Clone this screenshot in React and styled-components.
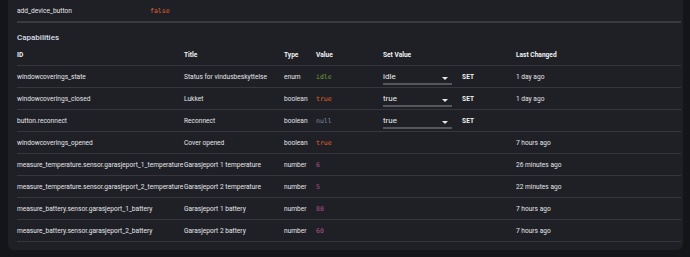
import React from 'react';
import styled, { createGlobalStyle } from 'styled-components';

const GlobalStyle = createGlobalStyle`
  body {
    margin: 0;
    background: #141518;
    font-family: Roboto, 'Liberation Sans', sans-serif;
    color: #e4e6ea;
  }
`;

const capabilities = [
  { id: 'windowcoverings_state', title: 'Status for vindusbeskyttelse', type: 'enum', value: 'idle', kind: 'enum', set: 'idle', changed: '1 day ago' },
  { id: 'windowcoverings_closed', title: 'Lukket', type: 'boolean', value: 'true', kind: 'bool', set: 'true', changed: '1 day ago' },
  { id: 'button.reconnect', title: 'Reconnect', type: 'boolean', value: 'null', kind: 'null', set: 'true', changed: '' },
  { id: 'windowcoverings_opened', title: 'Cover opened', type: 'boolean', value: 'true', kind: 'bool', changed: '7 hours ago' },
  { id: 'measure_temperature.sensor.garasjeport_1_temperature', title: 'Garasjeport 1 temperature', type: 'number', value: '6', kind: 'num', changed: '26 minutes ago' },
  { id: 'measure_temperature.sensor.garasjeport_2_temperature', title: 'Garasjeport 2 temperature', type: 'number', value: '5', kind: 'num', changed: '22 minutes ago' },
  { id: 'measure_battery.sensor.garasjeport_1_battery', title: 'Garasjeport 1 battery', type: 'number', value: '80', kind: 'num', changed: '7 hours ago' },
  { id: 'measure_battery.sensor.garasjeport_2_battery', title: 'Garasjeport 2 battery', type: 'number', value: '60', kind: 'num', changed: '7 hours ago' },
];

const valueColors = {
  enum: '#6f9a3c',
  bool: '#e0622b',
  null: '#7d8aa0',
  num: '#a9508a',
};

export default function App() {
  return (
    <>
      <GlobalStyle />
      <Card>
        <PropRow>
          <PropName>add_device_button</PropName>
          <Code color="#e0622b">false</Code>
        </PropRow>
        <Heading>Capabilities</Heading>
        <Table>
          <HeadRow>
            <span>ID</span>
            <span>Title</span>
            <span>Type</span>
            <span>Value</span>
            <span>Set Value</span>
            <span />
            <span>Last Changed</span>
          </HeadRow>
          {capabilities.map((c) => (
            <Row key={c.id}>
              <span>{c.id}</span>
              <span>{c.title}</span>
              <span>{c.type}</span>
              <Code color={valueColors[c.kind]}>{c.value}</Code>
              {c.set ? (
                <Select>
                  {c.set}
                  <Caret />
                </Select>
              ) : (
                <span />
              )}
              {c.set ? <SetButton>SET</SetButton> : <span />}
              <span>{c.changed}</span>
            </Row>
          ))}
        </Table>
      </Card>
    </>
  );
}

const Card = styled.div`
  margin: 0 7px 0 8px;
  padding: 0 2px 8px 9px;
  background: #1f2025;
  border-radius: 0 0 6px 6px;
  font-size: 6.6px;
`;

const PropRow = styled.div`
  display: flex;
  align-items: center;
  height: 21px;
  border-bottom: 2px solid #393a3f;
`;

const PropName = styled.span`
  width: 133px;
`;

const Code = styled.span`
  font-family: 'DejaVu Sans Mono', 'Liberation Mono', monospace;
  font-size: 6.5px;
  color: ${(p) => p.color};
`;

const Heading = styled.div`
  padding-top: 10px;
  height: 11px;
  line-height: 9px;
  font-size: 8px;
  font-weight: 500;
  color: #d9dfe8;
`;

const Table = styled.div`
  display: flex;
  flex-direction: column;
`;

const Row = styled.div`
  display: grid;
  grid-template-columns: 167px 100px 32px 67px 79px 54px 1fr;
  align-items: center;
  height: 21px;
  border-bottom: 1px solid #36373c;
  white-space: nowrap;
`;

const HeadRow = styled(Row)`
  font-weight: 700;
  color: #f0f1f3;
`;

const Select = styled.div`
  position: relative;
  display: flex;
  align-items: center;
  width: 69px;
  height: 15px;
  margin-top: 2px;
  font-size: 8px;
  color: #eceef1;
  border-bottom: 2px solid #55565b;
  box-sizing: border-box;
`;

const Caret = styled.span`
  position: absolute;
  right: 4px;
  top: 7px;
  border-left: 3px solid transparent;
  border-right: 3px solid transparent;
  border-top: 3px solid #e6e7ea;
`;

const SetButton = styled.span`
  font-weight: 700;
  font-size: 6.5px;
  color: #f0f1f3;
  letter-spacing: 0.2px;
`;
